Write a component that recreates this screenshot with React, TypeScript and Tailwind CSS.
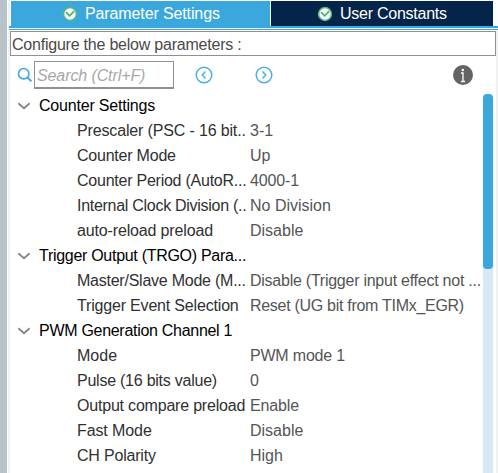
import React from "react";

type Param = { name: string; value: string; nameClass?: string; valueClass?: string };
type Group = { title: string; titleClass?: string; params: Param[] };

const groups: Group[] = [
  {
    title: "Counter Settings",
    titleClass: "tracking-[-0.2px]",
    params: [
      { name: "Prescaler (PSC - 16 bit..", value: "3-1", nameClass: "tracking-[-0.15px]" },
      { name: "Counter Mode", value: "Up", nameClass: "tracking-[-0.22px]" },
      { name: "Counter Period (AutoR...", value: "4000-1", nameClass: "tracking-[-0.24px]", valueClass: "tracking-[-0.15px]" },
      { name: "Internal Clock Division (..", value: "No Division", nameClass: "tracking-[-0.28px]" },
      { name: "auto-reload preload", value: "Disable", nameClass: "tracking-[-0.15px]" },
    ],
  },
  {
    title: "Trigger Output (TRGO) Para...",
    titleClass: "tracking-[-0.29px]",
    params: [
      { name: "Master/Slave Mode (M...", value: "Disable (Trigger input effect not ...", nameClass: "tracking-[-0.24px]", valueClass: "tracking-[-0.25px]" },
      { name: "Trigger Event Selection", value: "Reset (UG bit from TIMx_EGR)", nameClass: "tracking-[-0.18px]", valueClass: "tracking-[-0.29px]" },
    ],
  },
  {
    title: "PWM Generation Channel 1",
    titleClass: "tracking-[-0.29px]",
    params: [
      { name: "Mode", value: "PWM mode 1", valueClass: "tracking-[-0.2px]" },
      { name: "Pulse (16 bits value)", value: "0", nameClass: "tracking-[-0.24px]" },
      { name: "Output compare preload", value: "Enable", nameClass: "tracking-[-0.2px]", valueClass: "tracking-[-0.15px]" },
      { name: "Fast Mode", value: "Disable", nameClass: "tracking-[-0.1px]" },
      { name: "CH Polarity", value: "High", nameClass: "tracking-[-0.2px]" },
    ],
  },
];

function CheckBadge() {
  return (
    <svg width="16" height="16" viewBox="0 0 16 16" className="shrink-0">
      <circle cx="8" cy="8" r="7.2" fill="#5bb583" />
      <circle cx="8" cy="8" r="5.7" fill="#f4fbf6" />
      <path d="M4 6.2 7.6 9.8 12.2 5.2" fill="none" stroke="#54ae77" strokeWidth="1.8" />
    </svg>
  );
}

function CircleArrow({ left }: { left?: boolean }) {
  return (
    <svg width="18" height="18" viewBox="0 0 18 18" fill="none" stroke="#4bb0df" className="shrink-0">
      <circle cx="9" cy="9" r="7.8" strokeWidth="1.5" />
      <path d={left ? "M10.5 5.5 7.2 9l3.3 3.5" : "M7.5 5.5 10.8 9l-3.3 3.5"} strokeWidth="1.4" />
    </svg>
  );
}

export default function App() {
  return (
    <div className="flex h-[473px] w-[498px] overflow-hidden bg-white font-['Liberation_Sans',Arial,sans-serif] text-[16px] leading-[25px] whitespace-pre">
      <div className="w-[7px] bg-[#b7c2c9]" />
      <div className="ml-px w-[2px] bg-[#eff1f3]" />
      <div className="flex w-[486px] flex-col">
        <div className="mt-px ml-px flex h-[25px] shrink-0 gap-px text-white">
          <div className="flex w-[259px] items-center bg-[#3aa8dc] pl-[51px]">
            <CheckBadge />
            <span className="ml-[7px] tracking-[-0.12px]">Parameter Settings</span>
          </div>
          <div className="flex w-[222px] items-center bg-[#04244a] pl-[46px]">
            <CheckBadge />
            <span className="ml-[7px] tracking-[-0.25px]">User Constants</span>
          </div>
        </div>
        <div className="-ml-px h-[4px] w-[489px] shrink-0 border-t-2 border-b border-[#3aa8dc] bg-white" />
        <div className="mt-px h-[25px] shrink-0 border border-[#8b9197] pl-px leading-[25px] tracking-[-0.22px] text-[#4a4a4a]">
          Configure the below parameters :
        </div>
        <div className="mt-[5px] flex h-[28px] shrink-0 items-center">
          <svg width="16" height="16" viewBox="0 0 16 16" fill="none" stroke="#3aa8dc" className="ml-[7px]">
            <circle cx="6.7" cy="6.7" r="5.2" strokeWidth="1.6" />
            <path d="m10.4 10.4 4 4" strokeWidth="2" />
          </svg>
          <div className="ml-px h-[28px] w-[140px] border border-b-2 border-[#8b9197] pl-[2px] leading-[27px] tracking-[-0.1px] text-[#a8a8a8] italic">
            Search (Ctrl+F)
          </div>
          <div className="ml-[21px] flex"><CircleArrow left /></div>
          <div className="ml-[42px] flex"><CircleArrow /></div>
          <svg width="20" height="20" viewBox="0 0 20 20" className="ml-[180px]">
            <circle cx="10" cy="10" r="10" fill="#646464" />
            <path d="M8 8h2v8.5M8 16.5h4" fill="none" stroke="#fff" strokeWidth="1.3" />
            <circle cx="9.8" cy="5" r="1.2" fill="#fff" />
          </svg>
        </div>
        <div className="flex h-[384px] shrink-0">
          <div className="w-[473px] pt-[4px]">
            {groups.map((g) => (
              <section key={g.title}>
                <div className="flex h-[25px] items-center text-black">
                  <svg width="12" height="8" viewBox="0 0 12 8" className="mr-[9px] ml-[8px]" fill="none" stroke="#858585">
                    <path d="M.3 1.3 6 6.2 11.7 1.3" strokeWidth="1.8" />
                  </svg>
                  <span className={g.titleClass}>{g.title}</span>
                </div>
                {g.params.map((p) => (
                  <div key={p.name} className="flex h-[25px] pl-[67px]">
                    <span className="w-[173px] shrink-0 text-[#303030]"><span className={p.nameClass}>{p.name}</span></span>
                    <span className="text-[#555]"><span className={p.valueClass}>{p.value}</span></span>
                  </div>
                ))}
              </section>
            ))}
          </div>
          <div className="mt-[5px] w-[10px] rounded-t-[5px] bg-[#d9e8f5]">
            <div className="h-[175px] rounded-[4px] bg-[#3aa8dc]" />
          </div>
        </div>
      </div>
      <div className="mt-[30px] w-[2px] bg-[#f0f0f1]" />
    </div>
  );
}
